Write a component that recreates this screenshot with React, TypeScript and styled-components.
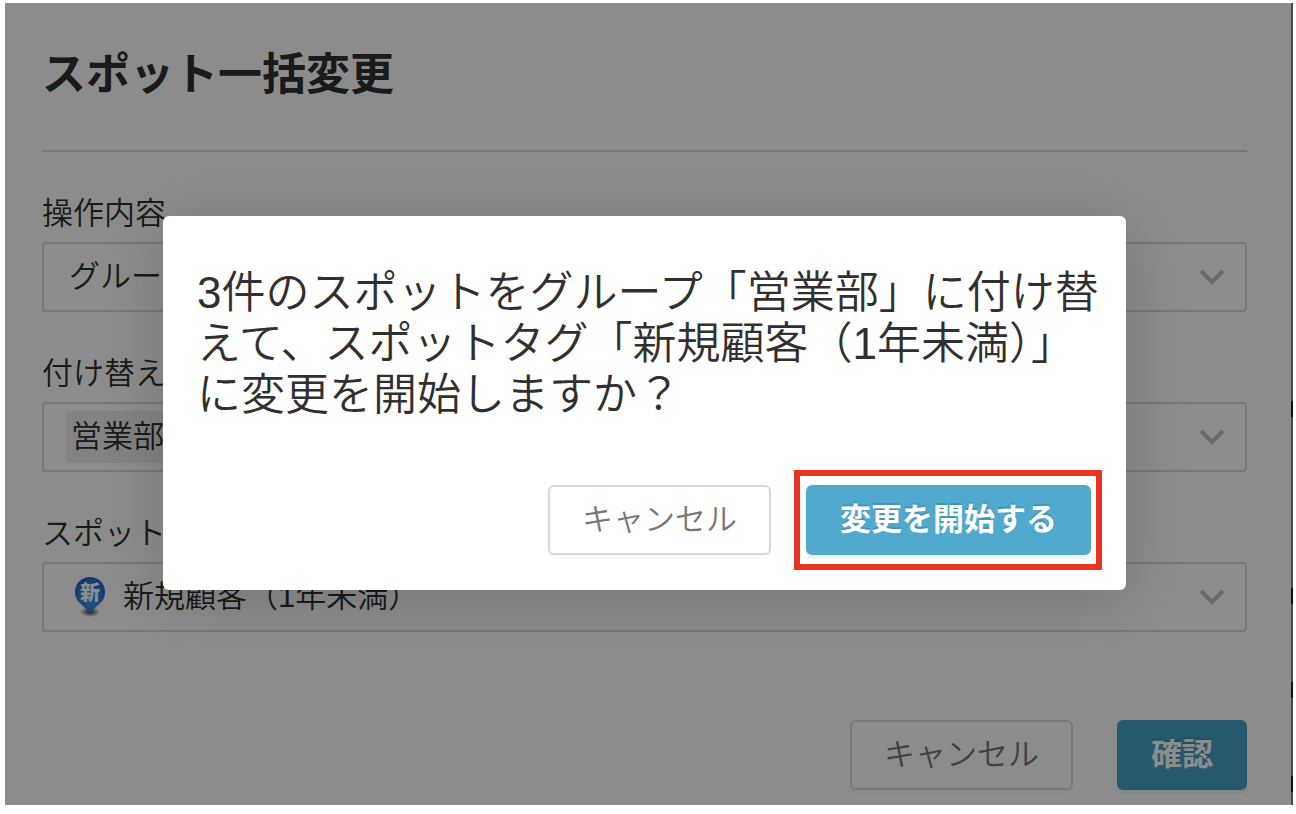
import React from "react";
import styled, { createGlobalStyle } from "styled-components";

const GlobalStyle = createGlobalStyle`
  *, *::before, *::after { box-sizing: border-box; }
  body {
    margin: 0;
    background: #fff;
    color: #303030;
    font-family: "Liberation Sans", "Noto Sans CJK JP", sans-serif;
    font-size: 31px;
    font-weight: 350;
    line-height: 36px;
  }
  h1, p { margin: 0; }
  button, select { font: inherit; color: inherit; }
`;

const Screen = styled.div`
  padding: 3px 3px 9px 5px;
`;

const Frame = styled.div`
  position: relative;
  padding-right: 2px;
  background: linear-gradient(
      #484a4c 398px,
      #101010 398px 414px,
      #484a4c 414px 585px,
      #101010 585px 601px,
      #484a4c 601px 679px,
      #101010 679px 695px,
      #484a4c 695px 773px,
      #101010 773px 789px,
      #484a4c 789px
    )
    right / 2px 100% no-repeat;
`;

const Page = styled.main`
  padding: 42px 44px 15px 37px;
`;

const Title = styled.h1`
  padding-bottom: 45px;
  border-bottom: 2px solid #d9d9d9;
  font-size: 44px;
  line-height: 60px;
  font-weight: 700;
`;

const Form = styled.form`
  display: flex;
  flex-direction: column;
  gap: 44px;
  padding-top: 44px;
`;

const Field = styled.div`
  display: flex;
  flex-direction: column;
  align-items: stretch;
  gap: 10px;
`;

const Label = styled.label`
  align-self: flex-start;
`;

const Control = styled.div`
  display: flex;
  align-items: center;
  height: 70px;
  border: 2px solid #d9d9d9;
  border-radius: 4px;
`;

const ControlIcon = styled.span`
  display: flex;
  flex: none;
  margin: 0 -10px 0 30px;
`;

const Select = styled.select`
  flex: 1;
  min-width: 0;
  height: 100%;
  padding: 0 0 0 25px;
  border: 0;
  background: transparent;
  appearance: none;
  outline: none;
`;

const Picker = styled.button`
  flex: 1;
  display: flex;
  align-items: center;
  height: 100%;
  padding: 0 0 0 22px;
  border: 0;
  background: transparent;
`;

const Chip = styled.span`
  padding: 8px 24px 8px 5px;
  border-radius: 4px;
  background: #efefef;
`;

const Caret = styled.svg`
  flex: none;
  margin-right: 19px;
  pointer-events: none;
`;

const Actions = styled.div<{ $gap: number }>`
  display: flex;
  justify-content: flex-end;
  gap: ${(p) => p.$gap}px;
`;

const Footer = styled(Actions)`
  margin-top: 44px;
`;

const Button = styled.button`
  height: 70px;
  padding: 0 32px;
  border: 2px solid #d9d9d9;
  border-radius: 6px;
  background: #fff;
  color: #777;
  white-space: nowrap;
  box-shadow: 0 4px 0 rgba(0, 0, 0, 0.02);
`;

const PrimaryButton = styled(Button)<{ $tone: string }>`
  border-color: ${(p) => p.$tone};
  background: ${(p) => p.$tone};
  color: #fff;
  font-weight: 700;
  text-shadow: 0 -2px 0 rgba(0, 0, 0, 0.12);
  box-shadow: 0 4px 0 rgba(0, 0, 0, 0.045);
`;

const Overlay = styled.div`
  position: absolute;
  inset: 0 2px 0 0;
  display: flex;
  align-items: center;
  justify-content: center;
  padding: 0 7px 2px 0;
  background: rgba(0, 0, 0, 0.45);
`;

const Dialog = styled.section`
  width: calc(100% - 316px);
  min-width: 480px;
  padding: 51px 22px 35px 34px;
  border-radius: 6px;
  background: #fff;
  box-shadow: 0 8px 64px rgba(0, 0, 0, 0.16);
`;

const Message = styled.p`
  font-size: 44px;
  line-height: 51px;
`;

const DialogActions = styled(Actions)`
  align-items: center;
  margin: 65px 2px 0 0;
`;

const Highlight = styled.div`
  margin: -15px 0;
  padding: 9px 5px 9px 6px;
  border: 6px solid #eb3323;
`;

function Chevron() {
  return (
    <Caret width="28" height="20" viewBox="0 0 28 20" fill="none" stroke="#bfbfbf" strokeWidth="4" aria-hidden="true">
      <path d="M3 4 L14 15 L25 4" />
    </Caret>
  );
}

function SpotPin() {
  return (
    <svg width="34" height="42" viewBox="0 0 34 42" aria-hidden="true">
      <defs>
        <radialGradient id="pinFill" cx="0.5" cy="0.62" r="0.6">
          <stop offset="0" stopColor="#3c9cf0" />
          <stop offset="0.6" stopColor="#2b7fe0" />
          <stop offset="1" stopColor="#2463c4" />
        </radialGradient>
        <radialGradient id="pinShadow">
          <stop offset="0" stopColor="#000" stopOpacity="0.8" />
          <stop offset="0.5" stopColor="#000" stopOpacity="0.4" />
          <stop offset="1" stopColor="#000" stopOpacity="0" />
        </radialGradient>
      </defs>
      <ellipse cx="16" cy="36" rx="10" ry="5" fill="url(#pinShadow)" />
      <path
        d="M16 1 C7.500 1 1 7.500 1 16 C1 22 4 26 8 29 C11 31.500 13 34 14.500 36.500 H17.500 C19 34 21 31.500 24 29 C28 26 31 22 31 16 C31 7.500 24.500 1 16 1 Z"
        fill="url(#pinFill)"
      />
      <text x="16" y="24" textAnchor="middle" fontSize="20" fontWeight="900" fill="#fff" fontFamily="'Noto Sans CJK JP', sans-serif">
        新
      </text>
    </svg>
  );
}

export default function App() {
  return (
    <>
      <GlobalStyle />
      <Screen>
        <Frame>
          <Page>
            <Title>スポット一括変更</Title>
            <Form onSubmit={(e) => e.preventDefault()}>
              <Field>
                <Label htmlFor="operation">操作内容</Label>
                <Control>
                  <Select id="operation">
                    <option>グループ</option>
                  </Select>
                  <Chevron />
                </Control>
              </Field>
              <Field>
                <Label htmlFor="group">付け替え</Label>
                <Control>
                  <Picker id="group" type="button" aria-haspopup="listbox">
                    <Chip>営業部</Chip>
                  </Picker>
                  <Chevron />
                </Control>
              </Field>
              <Field>
                <Label htmlFor="tag">スポット</Label>
                <Control>
                  <ControlIcon>
                    <SpotPin />
                  </ControlIcon>
                  <Select id="tag">
                    <option>新規顧客（1年未満）</option>
                  </Select>
                  <Chevron />
                </Control>
              </Field>
              <Footer $gap={44}>
                <Button type="button">キャンセル</Button>
                <PrimaryButton type="submit" $tone="#46a3ca">
                  確認
                </PrimaryButton>
              </Footer>
            </Form>
          </Page>
          <Overlay>
            <Dialog role="dialog" aria-modal="true" aria-labelledby="confirm-message">
              <Message id="confirm-message">
                3件のスポットをグループ「営業部」に付け替えて、スポットタグ「新規顧客（1年未満）」に変更を開始しますか？
              </Message>
              <DialogActions $gap={23}>
                <Button type="button">キャンセル</Button>
                <Highlight>
                  <PrimaryButton type="button" $tone="#51aacd">
                    変更を開始する
                  </PrimaryButton>
                </Highlight>
              </DialogActions>
            </Dialog>
          </Overlay>
        </Frame>
      </Screen>
    </>
  );
}
